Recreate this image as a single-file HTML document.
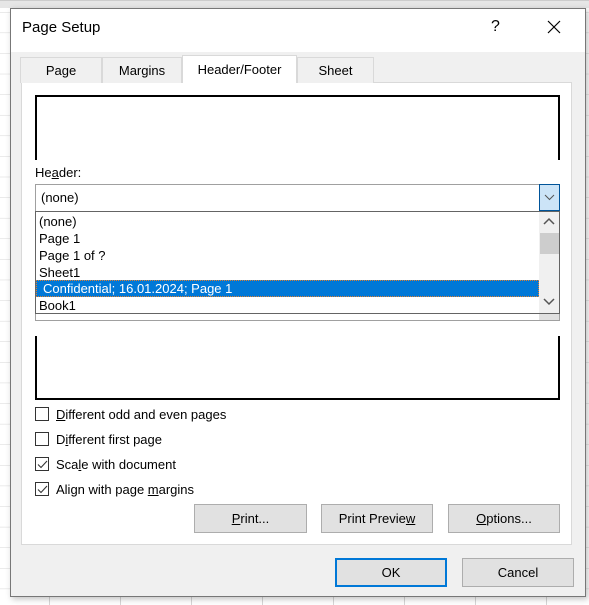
<!DOCTYPE html>
<html><head><meta charset="utf-8"><style>
*{box-sizing:border-box;margin:0;padding:0}
body{width:589px;height:605px;overflow:hidden;position:relative;font-family:"Liberation Sans",sans-serif;font-size:12px;color:#000;
background-color:#fff;
background-image:linear-gradient(90deg,transparent 49px,#d6d6d6 49px,#d6d6d6 50px,transparent 50px),linear-gradient(0deg,transparent 20px,#d6d6d6 20px);
background-size:71px 100%,100% 20.6px;background-position:0 0,0 12px}
.top{position:absolute;left:0;top:0;width:589px;height:8px;background:#e6e6e6;border-top:1px solid #ccc}
.a{position:absolute}
.dlg{left:10px;top:8px;width:576px;height:589px;background:#f0f0f0;border:1px solid #777;box-shadow:2px 2px 6px rgba(0,0,0,.25)}
.title{left:0;top:0;width:574px;height:43px;background:#fff}
.tab{top:57px;height:26px;background:#f0f0f0;border:1px solid #d9d9d9;border-bottom:none;text-align:center;line-height:26px;font-size:13px}
.panel{left:21px;top:82px;width:551px;height:463px;background:#fff;border:1px solid #d9d9d9}
.box{border:2px solid #000;background:#fff}
.cb{width:14px;height:14px;border:1px solid #333;background:#fff}
.lbl{font-size:13px}
.btn{background:#e1e1e1;border:1px solid #adadad;text-align:center;font-size:13px}
u{text-decoration:underline}
.item{left:39px;font-size:13px;height:17px;line-height:17px}
</style></head><body>
<div class="top"></div>
<div class="a dlg"></div>
<div class="a title" style="left:11px;top:9px"></div>
<div class="a" style="left:22px;top:19px;font-size:15px">Page Setup</div>
<div class="a" style="left:491px;top:18px;font-size:16px">?</div>
<svg class="a" style="left:547px;top:20px" width="14" height="14"><path d="M1 1L13 13M13 1L1 13" stroke="#000" stroke-width="1.2"/></svg>
<div class="a panel"></div>
<div class="a tab" style="left:20px;width:82px">Page</div>
<div class="a tab" style="left:102px;width:80px">Margins</div>
<div class="a tab" style="left:297px;width:77px">Sheet</div>
<div class="a tab" style="left:182px;width:115px;top:55px;height:28px;background:#fff;line-height:28px">Header/Footer</div>
<div class="a box" style="left:35px;top:95px;width:525px;height:65px;border-bottom:none"></div>
<div class="a lbl" style="left:35px;top:165px">He<u>a</u>der:</div>
<div class="a" style="left:35px;top:184px;width:525px;height:28px;border:1px solid #a0a0a0;background:#fff"></div>
<div class="a" style="left:41px;top:190px;font-size:13px">(none)</div>
<div class="a" style="left:539px;top:184px;width:21px;height:27px;background:#cce4f7;border:1px solid #005499"></div>
<svg class="a" style="left:544px;top:194px" width="11" height="7"><path d="M1 1L5.5 5.5L10 1" stroke="#555" fill="none"/></svg>
<div class="a" style="left:35px;top:312px;width:525px;height:9px;border:1px solid #a0a0a0;border-top:none;background:#fff"></div>
<div class="a" style="left:539px;top:312px;width:20px;height:8px;background:#e0e0e0"></div>
<div class="a" style="left:35px;top:211px;width:525px;height:103px;border:1px solid #646464;background:#fff"></div>
<div class="a" style="left:539px;top:212px;width:20px;height:101px;background:#f0f0f0"></div>
<div class="a" style="left:540px;top:233px;width:19px;height:21px;background:#cdcdcd"></div>
<svg class="a" style="left:543px;top:217px" width="12" height="8"><path d="M1 7L6 2L11 7" stroke="#555" stroke-width="1.5" fill="none"/></svg>
<svg class="a" style="left:543px;top:298px" width="12" height="8"><path d="M1 1L6 6L11 1" stroke="#555" stroke-width="1.5" fill="none"/></svg>
<div class="a item" style="top:213px">(none)</div>
<div class="a item" style="top:230px">Page 1</div>
<div class="a item" style="top:247px">Page 1 of ?</div>
<div class="a item" style="top:264px">Sheet1</div>
<div class="a" style="left:36px;top:280px;width:503px;height:17px;background:#0078d7;outline:1px dotted #e08030;outline-offset:-1px"></div>
<div class="a item" style="top:280px;left:43px;color:#fff">Confidential; 16.01.2024; Page 1</div>
<div class="a item" style="top:297px">Book1</div>
<div class="a box" style="left:35px;top:336px;width:525px;height:64px;border-top:none"></div>
<div class="a cb" style="left:35px;top:407px"></div>
<div class="a lbl" style="left:56px;top:407px"><u>D</u>ifferent odd and even pages</div>
<div class="a cb" style="left:35px;top:432px"></div>
<div class="a lbl" style="left:56px;top:432px">D<u>i</u>fferent first page</div>
<div class="a cb" style="left:35px;top:457px"></div>
<svg class="a" style="left:37px;top:460px" width="11" height="9"><path d="M1 4.5L4 7.5L10 1" stroke="#333" stroke-width="1.1" fill="none"/></svg>
<div class="a lbl" style="left:56px;top:457px">Sca<u>l</u>e with document</div>
<div class="a cb" style="left:35px;top:482px"></div>
<svg class="a" style="left:37px;top:485px" width="11" height="9"><path d="M1 4.5L4 7.5L10 1" stroke="#333" stroke-width="1.1" fill="none"/></svg>
<div class="a lbl" style="left:56px;top:482px">Align with page <u>m</u>argins</div>
<div class="a btn" style="left:194px;top:504px;width:113px;height:29px;line-height:27px"><u>P</u>rint...</div>
<div class="a btn" style="left:321px;top:504px;width:112px;height:29px;line-height:27px">Print Previe<u>w</u></div>
<div class="a btn" style="left:448px;top:504px;width:112px;height:29px;line-height:27px"><u>O</u>ptions...</div>
<div class="a btn" style="left:335px;top:558px;width:112px;height:29px;line-height:25px;border:2px solid #0078d7">OK</div>
<div class="a btn" style="left:462px;top:558px;width:112px;height:29px;line-height:27px">Cancel</div>
</body></html>
